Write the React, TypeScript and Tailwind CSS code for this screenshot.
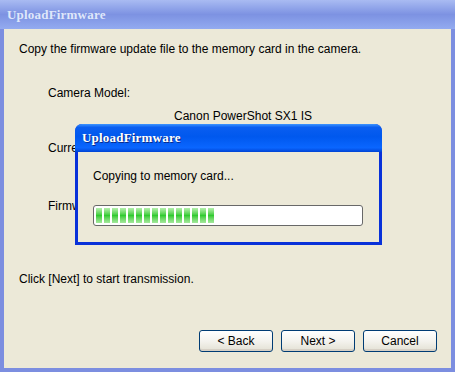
import React from 'react';

const uiFont = { fontFamily: '"Liberation Sans Narrow", "Arial Narrow", "Liberation Sans", Arial, sans-serif' };
const titleFont = { fontFamily: '"Liberation Serif", "Times New Roman", serif' };

function XpButton({ label }: { label: string }) {
    return (
        <button className="w-[74px] h-[22px] rounded-[3px] border border-[#003c74] bg-gradient-to-b from-[#ffffff] via-[#f4f3ee] to-[#e3e1d4] text-[12px] leading-[14px] text-black shadow-[inset_0_-2px_0_#d6d0c5]">
            {label}
        </button>
    );
}

function ProgressBar({ blocks }: { blocks: number }) {
    return (
        <div className="w-[270px] h-[21px] rounded-[3px] border border-[#686868] bg-white px-[2px] py-[2px] flex gap-[2px]">
            {Array.from({ length: blocks }).map((_, i) => (
                <div
                    key={i}
                    className="w-[6px] h-full bg-gradient-to-b from-[#b4f0ac] via-[#2fcb2f] to-[#a4e99c]"
                />
            ))}
        </div>
    );
}

export default function App() {
    return (
        <div className="w-[455px] h-[372px] flex flex-col bg-[#7c8ee0] overflow-hidden" style={uiFont}>
            {/* Inactive outer title bar */}
            <div className="h-[29px] shrink-0 flex items-center pl-[7px] bg-gradient-to-b from-[#a9bbf2] via-[#7d92e2] to-[#93abf0]">
                <span className="text-[13px] font-bold text-[#dfe7fa] tracking-[0.2px]" style={titleFont}>
                    UploadFirmware
                </span>
            </div>

            {/* Wizard page */}
            <div className="relative flex-1 mx-[4px] mb-[4px] bg-[#ece9d8] flex flex-col text-[12px] leading-[14px] text-black">
                <p className="ml-[15px] mt-[13px]">Copy the firmware update file to the memory card in the camera.</p>

                <p className="ml-[44px] mt-[30px]">Camera Model:</p>
                <p className="ml-[170px] mt-[9px]">Canon PowerShot SX1 IS</p>

                {/* labels partly covered by the progress dialog */}
                <p className="ml-[44px] mt-[18px] w-[27px] overflow-hidden whitespace-nowrap">Current Firmware:</p>
                <p className="ml-[44px] mt-[44px] w-[27px] overflow-hidden whitespace-nowrap">Firmware Update:</p>

                <p className="ml-[15px] mt-[59px]">Click [Next] to start transmission.</p>

                <div className="mt-auto mb-[16px] mr-[14px] flex justify-end gap-[8px]">
                    <XpButton label="< Back" />
                    <XpButton label="Next >" />
                    <XpButton label="Cancel" />
                </div>

                {/* Active progress dialog */}
                <div className="absolute left-[71px] top-[95px] w-[307px] h-[121px] flex flex-col rounded-t-[7px] bg-[#0831d9] overflow-hidden">
                    <div className="h-[28px] shrink-0 flex items-center pl-[7px] bg-[linear-gradient(to_bottom,#3d95ff_0%,#0a5ef0_12%,#0058ee_45%,#0a66ff_85%,#0043d4_100%)]">
                        <span className="text-[13px] font-bold text-white tracking-[0.2px] [text-shadow:1px_1px_0_#0a2c8c]" style={titleFont}>
                            UploadFirmware
                        </span>
                    </div>
                    <div className="flex-1 mx-[3px] mb-[3px] bg-[#ece9d8] flex flex-col pl-[15px]">
                        <p className="mt-[17px] text-[12px] leading-[14px]">Copying to memory card...</p>
                        <div className="mt-[22px]">
                            <ProgressBar blocks={15} />
                        </div>
                    </div>
                </div>
            </div>
        </div>
    );
}
